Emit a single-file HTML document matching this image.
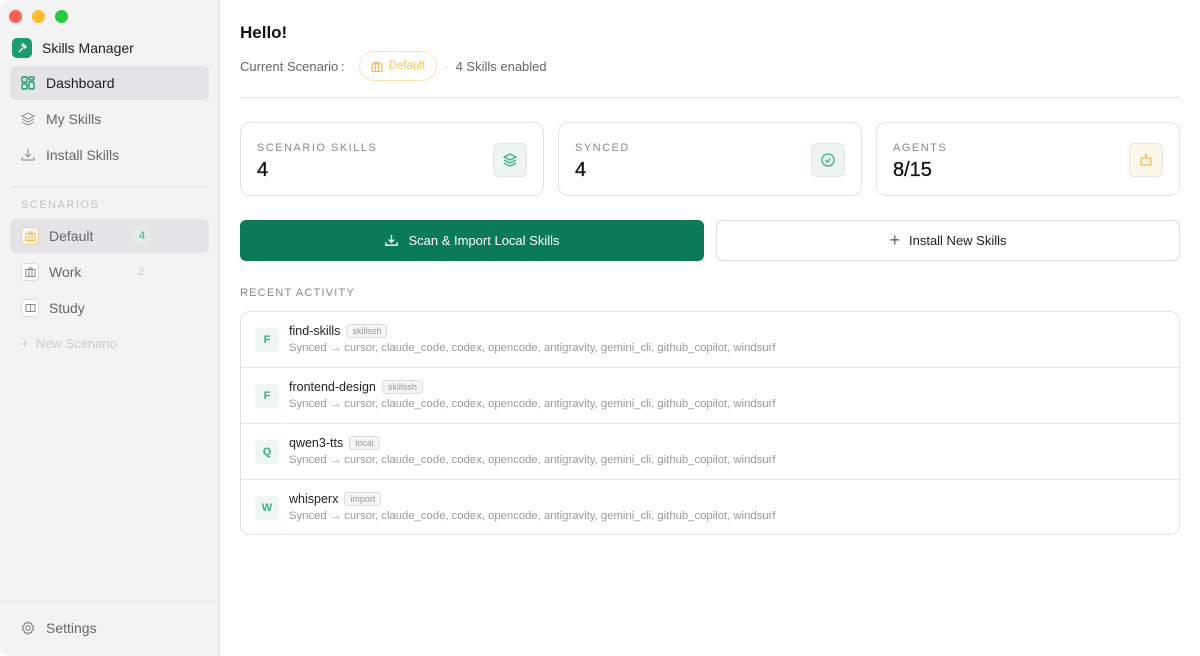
<!DOCTYPE html>
<html><head><meta charset="utf-8"><style>
*{box-sizing:border-box;margin:0;padding:0}
body{width:1200px;height:656px;overflow:hidden;font-family:"Liberation Sans",sans-serif;background:#fff;position:relative;color:#1d1d1f}
.sb{position:absolute;left:0;top:0;width:220px;height:656px;background:#f3f3f3;border-right:1px solid #e2e2e2;border-top-left-radius:10px;border-bottom-left-radius:10px}
.dot{position:absolute;top:10px;width:13px;height:13px;border-radius:50%}
.nav{position:absolute;left:10px;width:199px;height:34px;border-radius:6px;display:flex;align-items:center;font-size:14px;color:#666}
.nav svg{margin-left:10px;margin-right:10px}
.sel{background:#e4e4e6;color:#1d1d1f}
.sc{position:absolute;left:10px;width:199px;height:34px;border-radius:6px;display:flex;align-items:center;font-size:14px;color:#666}
.sc .ic{width:18px;height:18px;margin-left:11px;margin-right:10px;border:1px solid #ddd;border-radius:4px;background:#fff;display:flex;align-items:center;justify-content:center}
.main{position:absolute;left:221px;top:0;right:0;height:656px}
.card{position:absolute;top:122px;width:304px;height:74px;border:1px solid #e3e3e3;border-radius:10px}
.card .l{position:absolute;left:16px;top:19px;font-size:11px;letter-spacing:1.5px;color:#8a8a8a}
.card .v{position:absolute;left:16px;top:36px;font-size:20px;color:#111;-webkit-text-stroke:0.3px #111}
.card .b{position:absolute;right:16px;top:20px;width:34px;height:34px;border-radius:6px;border:1px solid #e5e5e5;display:flex;align-items:center;justify-content:center}
.row{position:absolute;left:0;width:939px;height:56px;border-bottom:1px solid #e8e8e8}
.row .av{position:absolute;left:14px;top:16px;width:24px;height:24px;border-radius:4px;background:#eef6f2;color:#3bb07f;font-size:11px;font-weight:bold;display:flex;align-items:center;justify-content:center}
.row .n{position:absolute;left:48px;top:12px;font-size:12.5px;color:#222;display:flex;align-items:center}
.tag{margin-left:6px;font-size:9px;color:#999;border:1px solid #ddd;background:#f5f5f5;border-radius:3px;padding:1px 5px}
.row .s{position:absolute;left:48px;top:30px;font-size:11.3px;color:#999}
</style></head><body>
<div class="sb">
<div class="dot" style="left:9px;background:#fe5f57"></div>
<div class="dot" style="left:32px;background:#febc2e"></div>
<div class="dot" style="left:55px;background:#28c840"></div>
<div style="position:absolute;left:12px;top:38px;width:20px;height:20px;border-radius:5px;background:#1a9c6c;display:flex;align-items:center;justify-content:center"><svg width="12" height="12" viewBox="0 0 12 12"><path d="M3 10L7 6M6 3l3 3 1-1-3-3z" stroke="#fff" stroke-width="1.4" fill="none"/></svg></div>
<div style="position:absolute;left:42px;top:40px;font-size:14px;color:#1d1d1f">Skills Manager</div>
<div class="nav sel" style="top:66px"><svg width="16" height="16" viewBox="0 0 16 16" fill="none" stroke="#1a9c6c" stroke-width="1.4"><rect x="2" y="2" width="5" height="5" rx="1"/><rect x="9" y="2" width="5" height="3" rx="1"/><rect x="2" y="9" width="5" height="5" rx="1"/><rect x="9" y="7" width="5" height="7" rx="1"/></svg>Dashboard</div>
<div class="nav" style="top:102px"><svg width="16" height="16" viewBox="0 0 16 16" fill="none" stroke="#999" stroke-width="1.2"><path d="M8 2L2 5l6 3 6-3z"/><path d="M2 8l6 3 6-3M2 11l6 3 6-3"/></svg>My Skills</div>
<div class="nav" style="top:138px"><svg width="16" height="16" viewBox="0 0 16 16" fill="none" stroke="#999" stroke-width="1.2"><path d="M8 2v8M5 7l3 3 3-3M2 10v3h12v-3"/></svg>Install Skills</div>
<div style="position:absolute;left:10px;top:186px;width:198px;border-top:1px solid #e2e2e2"></div>
<div style="position:absolute;left:21px;top:199px;font-size:11px;letter-spacing:1.5px;color:#c2c2c2">SCENARIOS</div>
<div class="sc sel" style="top:219px"><div class="ic" style="border-color:#f3cfa0;background:#fbf6ee"><svg width="11" height="10" viewBox="0 0 11 10" fill="none" stroke="#f0b84a"><rect x="1" y="2.5" width="9" height="7"/><path d="M4 2.5V1h3v1.5M4 2.5v7M7 2.5v7"/></svg></div>Default<span style="position:absolute;left:122px;width:20px;height:18px;border-radius:9px;background:#e3ebe6;color:#3bb07f;font-size:11px;text-align:center;line-height:18px">4</span></div>
<div class="sc" style="top:255px"><div class="ic"><svg width="11" height="10" viewBox="0 0 11 10" fill="none" stroke="#888"><rect x="1" y="2.5" width="9" height="7"/><path d="M4 2.5V1h3v1.5M4 2.5v7M7 2.5v7"/></svg></div>Work<span style="position:absolute;left:128px;color:#ccc;font-size:11px">2</span></div>
<div class="sc" style="top:291px"><div class="ic"><svg width="11" height="10" viewBox="0 0 11 10" fill="none" stroke="#888"><path d="M1 1.5h4l.5 1 .5-1h4v7H1zM5.5 2.5v6"/></svg></div>Study</div>
<div style="position:absolute;left:21px;top:336px;font-size:13px;color:#ccc">+&nbsp;&nbsp;New Scenario</div>
<div style="position:absolute;left:0;top:601px;width:219px;border-top:1px solid #e2e2e2"></div>
<div class="nav" style="top:611px"><svg width="16" height="16" viewBox="0 0 16 16" fill="none" stroke="#888" stroke-width="1.1"><circle cx="8" cy="8" r="2.2"/><path d="M8 1.8l1.3 1.5 2-.3.4 2 1.8 1-1 1.9 1 1.9-1.8 1-.4 2-2-.3L8 14.2l-1.3-1.5-2 .3-.4-2-1.8-1 1-1.9-1-1.9 1.8-1 .4-2 2 .3z"/></svg>Settings</div>
</div>
<div class="main">
<div style="position:absolute;left:19px;top:23px;font-size:17px;font-weight:bold;color:#111">Hello!</div>
<div style="position:absolute;left:19px;top:59px;font-size:13px;color:#666">Current Scenario&thinsp;:</div>
<div style="position:absolute;left:138px;top:51px;width:78px;height:30px;border:1.5px solid #f6e3bd;border-radius:15px;display:flex;align-items:center;justify-content:center;font-size:11.5px;color:#f3c65a"><svg width="12" height="11" viewBox="0 0 11 10" fill="none" stroke="#f0b84a" style="margin-right:6px"><rect x="1" y="2.5" width="9" height="7"/><path d="M4 2.5V1h3v1.5M4 2.5v7M7 2.5v7"/></svg>Default</div>
<div style="position:absolute;left:223px;top:59px;font-size:13px;color:#666"><span style="color:#ccc">·</span>&nbsp;&nbsp;4 Skills enabled</div>
<div style="position:absolute;left:19px;top:97px;width:940px;border-top:1px solid #e3e3e3"></div>
<div class="card" style="left:19px"><div class="l">SCENARIO SKILLS</div><div class="v">4</div><div class="b" style="background:#eef5f1"><svg width="16" height="16" viewBox="0 0 16 16" fill="none" stroke="#3bb07f" stroke-width="1.3"><path d="M8 2L2 5l6 3 6-3z"/><path d="M2 8l6 3 6-3M2 11l6 3 6-3"/></svg></div></div>
<div class="card" style="left:337px"><div class="l">SYNCED</div><div class="v">4</div><div class="b" style="background:#eef5f1"><svg width="16" height="16" viewBox="0 0 16 16" fill="none" stroke="#3bb07f" stroke-width="1.3"><circle cx="8" cy="8" r="6"/><path d="M5.5 8l2 2 3-3.5"/></svg></div></div>
<div class="card" style="left:655px"><div class="l">AGENTS</div><div class="v">8/15</div><div class="b" style="background:#fdf6ea"><svg width="14" height="14" viewBox="0 0 14 14" fill="none" stroke="#f0b84a" stroke-width="1.3"><rect x="2" y="5" width="10" height="7" rx="1.5"/><path d="M7 5V2.5"/><circle cx="7" cy="2" r=".6"/><path d="M5 8v1M9 8v1"/></svg></div></div>
<div style="position:absolute;left:19px;top:220px;width:464px;height:41px;background:#0b7a57;border-radius:6px;display:flex;align-items:center;justify-content:center;color:#fff;font-size:13px"><svg width="15" height="15" viewBox="0 0 16 16" fill="none" stroke="#fff" stroke-width="1.4" style="margin-right:9px"><path d="M8 2v8M5 7l3 3 3-3M2 10v3h12v-3"/></svg>Scan &amp; Import Local Skills</div>
<div style="position:absolute;left:495px;top:220px;width:464px;height:41px;border:1px solid #ddd;border-radius:6px;display:flex;align-items:center;justify-content:center;color:#222;font-size:13px"><span style="font-size:18px;color:#666;margin-right:9px;font-weight:300">+</span>Install New Skills</div>
<div style="position:absolute;left:19px;top:287px;font-size:11px;letter-spacing:1.2px;color:#888">RECENT ACTIVITY</div>
<div style="position:absolute;left:19px;top:311px;width:940px;height:224px;border:1px solid #e3e3e3;border-radius:10px;overflow:hidden">
<div class="row" style="top:0"><div class="av">F</div><div class="n">find-skills<span class="tag">skillssh</span></div><div class="s">Synced → cursor, claude_code, codex, opencode, antigravity, gemini_cli, github_copilot, windsurf</div></div>
<div class="row" style="top:56px"><div class="av">F</div><div class="n">frontend-design<span class="tag">skillssh</span></div><div class="s">Synced → cursor, claude_code, codex, opencode, antigravity, gemini_cli, github_copilot, windsurf</div></div>
<div class="row" style="top:112px"><div class="av">Q</div><div class="n">qwen3-tts<span class="tag">local</span></div><div class="s">Synced → cursor, claude_code, codex, opencode, antigravity, gemini_cli, github_copilot, windsurf</div></div>
<div class="row" style="top:168px;border-bottom:none"><div class="av">W</div><div class="n">whisperx<span class="tag">import</span></div><div class="s">Synced → cursor, claude_code, codex, opencode, antigravity, gemini_cli, github_copilot, windsurf</div></div>
</div>
</div>
</body></html>
